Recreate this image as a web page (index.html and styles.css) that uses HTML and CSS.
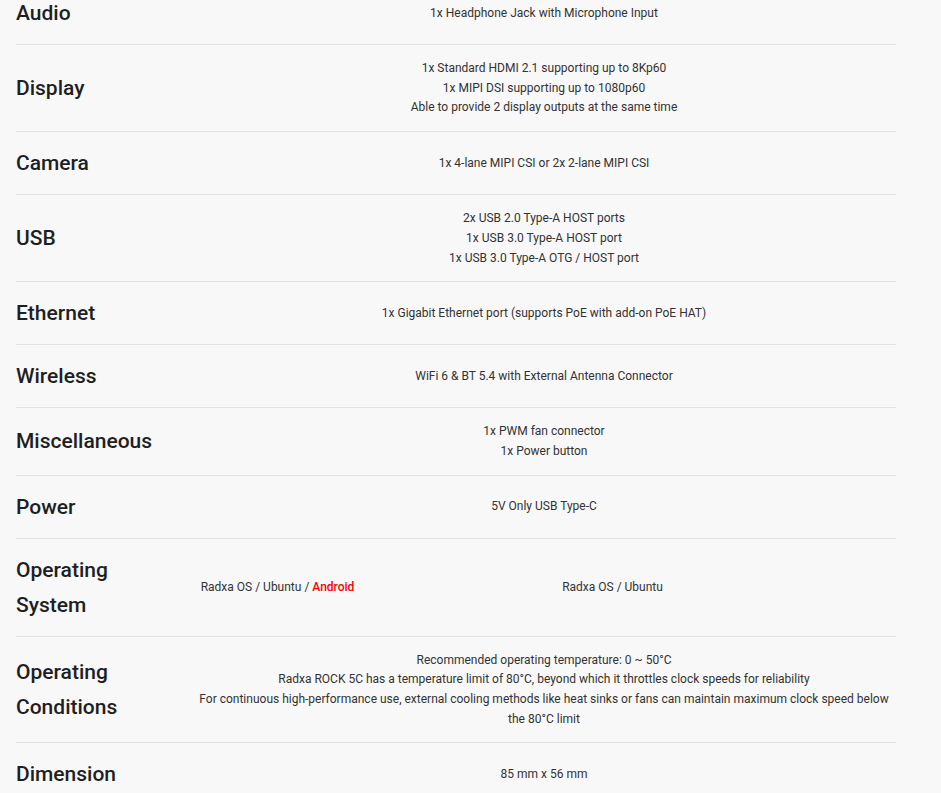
FILE: index.html
```html
<!DOCTYPE html>
<html>
<head>
<meta charset="utf-8">
<link rel="stylesheet" href="styles.css">
</head>
<body>
<div class="specs">
  <div class="row"><div class="label">Audio</div><div class="value"><p>1x Headphone Jack with Microphone Input</p></div></div>
  <div class="row"><div class="label">Display</div><div class="value"><p>1x Standard HDMI 2.1 supporting up to 8Kp60</p><p>1x MIPI DSI supporting up to 1080p60</p><p>Able to provide 2 display outputs at the same time</p></div></div>
  <div class="row"><div class="label">Camera</div><div class="value"><p>1x 4-lane MIPI CSI or 2x 2-lane MIPI CSI</p></div></div>
  <div class="row"><div class="label">USB</div><div class="value"><p>2x USB 2.0 Type-A HOST ports</p><p>1x USB 3.0 Type-A HOST port</p><p>1x USB 3.0 Type-A OTG / HOST port</p></div></div>
  <div class="row"><div class="label">Ethernet</div><div class="value"><p>1x Gigabit Ethernet port (supports PoE with add-on PoE HAT)</p></div></div>
  <div class="row"><div class="label">Wireless</div><div class="value"><p>WiFi 6 &amp; BT 5.4 with External Antenna Connector</p></div></div>
  <div class="row"><div class="label">Miscellaneous</div><div class="value"><p>1x PWM fan connector</p><p>1x Power button</p></div></div>
  <div class="row"><div class="label">Power</div><div class="value"><p>5V Only USB Type-C</p></div></div>
  <div class="row"><div class="label">Operating System</div><div class="value split"><p class="col-a">Radxa OS / Ubuntu / <span class="red">Android</span></p><p class="col-b">Radxa OS / Ubuntu</p></div></div>
  <div class="row"><div class="label">Operating Conditions</div><div class="value"><p>Recommended operating temperature: 0 ~ 50°C</p><p>Radxa ROCK 5C has a temperature limit of 80°C, beyond which it throttles clock speeds for reliability</p><p>For continuous high-performance use, external cooling methods like heat sinks or fans can maintain maximum clock speed below the 80°C limit</p></div></div>
  <div class="row"><div class="label">Dimension</div><div class="value"><p>85 mm x 56 mm</p></div></div>
</div>
</body>
</html>
```
FILE: styles.css
```css
html, body {
  margin: 0;
  padding: 0;
  background: #f8f8f8;
}
body {
  font-family: Roboto, "Liberation Sans", sans-serif;
  overflow: hidden;
}
.specs {
  margin: -18px 0 0 16px;
  width: 880px;
}
.row {
  display: grid;
  grid-template-columns: 176px 704px;
  align-items: center;
  padding: 14px 0 13px;
  border-bottom: 1px solid #e2e2e2;
}
.label {
  font-size: 21px;
  font-weight: 500;
  line-height: 35px;
  color: #1f1f1f;
  padding-right: 60px;
}
.value {
  text-align: center;
  font-size: 12px;
  line-height: 19.7px;
  color: #333;
}
.value p {
  margin: 0;
}
.split {
  display: grid;
  grid-template-columns: 171px 499px 34px;
}
.red {
  color: #f00;
  font-weight: 500;
}
```
